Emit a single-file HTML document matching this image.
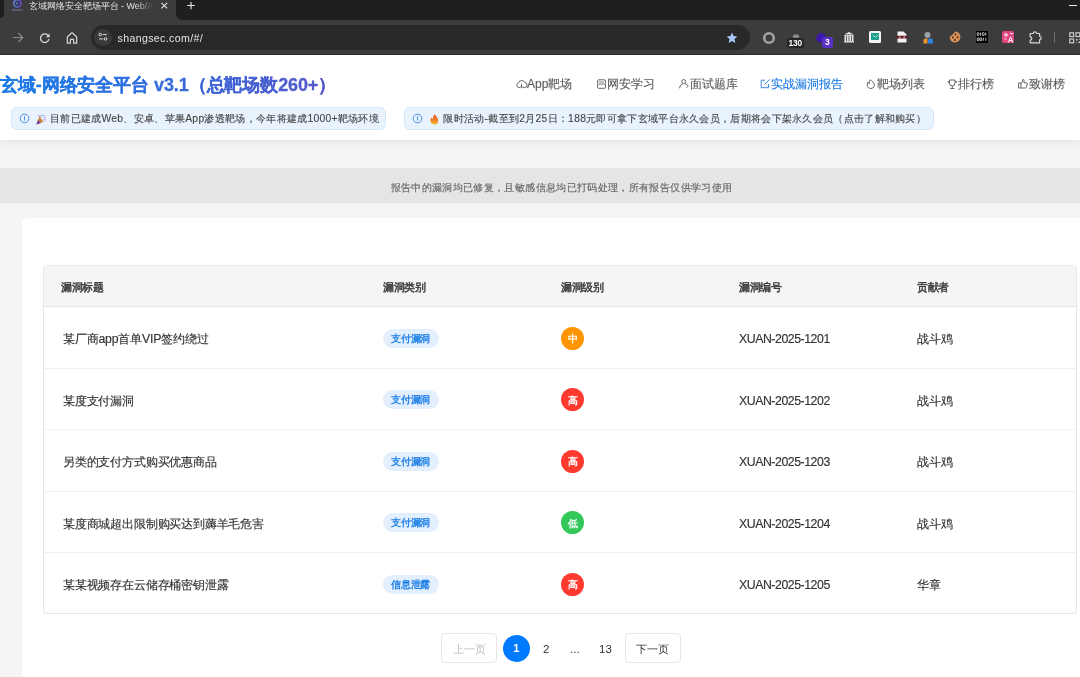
<!DOCTYPE html>
<html><head><meta charset="utf-8">
<style>
*{box-sizing:border-box;margin:0;padding:0}
html,body{width:1080px;height:677px;overflow:hidden;background:#f5f5f7;font-family:"Liberation Sans",sans-serif}
.abs{position:absolute}
#tabs{position:absolute;left:0;top:0;width:1080px;height:20px;background:#3c3c3c}
#tab{position:absolute;left:3px;top:0;width:173px;height:20px}
#toolbar{position:absolute;left:0;top:20px;width:1080px;height:35px;background:#3c3c3c}
#omni{position:absolute;left:91px;top:4.8px;width:659px;height:25px;background:#282828;border-radius:13px}
#page{position:absolute;left:0;top:55px;width:1080px;height:622px;background:#f5f5f7;overflow:hidden}
#header{position:absolute;left:0;top:0;width:1080px;height:85px;background:#fff;box-shadow:0 2px 8px rgba(0,0,0,.08)}
#title{position:absolute;left:0;top:17px;font-size:18px;font-weight:bold;white-space:nowrap;background:linear-gradient(90deg,#1a7ae6 0%,#2f6fe0 40%,#5656c8 100%);-webkit-background-clip:text;background-clip:text;color:transparent;line-height:26px;letter-spacing:-.1px;-webkit-text-stroke:.3px transparent}
.nav{position:absolute;top:20px;font-size:12px;color:#5a5a5a;white-space:nowrap;line-height:18px}
.nav.on{color:#1a7ae6}
.nav svg{position:absolute;left:0;top:4px}
.nav span{position:absolute;left:11px;top:0;-webkit-text-stroke:.12px currentColor}
.pill{position:absolute;top:51.5px;height:23px;background:#e9f3fe;border:1px solid #d3e6fb;border-radius:6px}
.pill .txt{position:absolute;top:3.5px;-webkit-text-stroke:.12px #444;letter-spacing:.3px;font-size:10.3px;color:#444;white-space:nowrap;line-height:16px}
#band{position:absolute;left:0;top:113px;width:1080px;height:35px;background:#e5e5e7}
#band div{position:absolute;left:390.5px;top:11.5px;-webkit-text-stroke:.15px #666;white-space:nowrap;letter-spacing:.36px;font-size:10.3px;color:#666;line-height:16px}
#card{position:absolute;left:22px;top:162.5px;width:1070px;height:500px;background:#fff;border-radius:4px;box-shadow:0 0 2px rgba(0,0,0,.05)}
#table{position:absolute;left:21px;top:47.5px;width:1034px;height:349px;border:1px solid #e6e6e8;border-radius:4px;overflow:hidden}
#thead{position:absolute;left:0;top:0;width:1034px;height:41px;background:#f5f5f7;border-bottom:1px solid #e6e6e8}
.th{position:absolute;top:13px;font-size:10.7px;letter-spacing:-.5px;font-weight:normal;-webkit-text-stroke:.45px #3a3a3a;color:#3a3a3a;line-height:16px;white-space:nowrap}
.row{position:absolute;left:0;width:1034px;height:61.5px;border-bottom:1px solid #f2f2f2}
.td{position:absolute;top:23px;font-size:12.3px;color:#333;-webkit-text-stroke:.15px #333;letter-spacing:-.18px;line-height:18px;white-space:nowrap}
.tag{position:absolute;left:339px;top:21.5px;width:55.5px;height:19px;border-radius:10px;background:#e3effd;color:#1a7ee8;font-size:9.8px;font-weight:normal;-webkit-text-stroke:.35px #1a7ee8;text-align:center;line-height:20px;letter-spacing:-.3px;text-indent:-.3px}
.lvl{position:absolute;left:517px;top:19.5px;padding-top:.8px;width:23.4px;height:23.4px;border-radius:50%;color:#fff;font-size:9.5px;font-weight:bold;text-align:center;line-height:23.4px}
.pbtn{position:absolute;top:577.5px;height:30px;width:56px;border:1px solid #e6e6e6;border-radius:4px;font-size:11px;text-align:center;line-height:30px;background:#fff}
.pn{position:absolute;top:586px;font-size:11.5px;color:#333;line-height:16px}
</style></head><body><div style="will-change:transform;position:absolute;left:0;top:0;width:1080px;height:677px;overflow:hidden">
<div id="tabs">
  <div class="abs" style="left:0;top:0;width:4px;height:17.5px;background:#1f1f1f;border-radius:0 0 4px 0"></div>
  <div id="tab">
    <svg class="abs" style="left:5.5px;top:0;opacity:.8" width="14" height="13" viewBox="0 0 14 13"><defs><linearGradient id="fg" x1="0" y1="0" x2="1" y2="0"><stop offset="0" stop-color="#6a9ad8"/><stop offset="1" stop-color="#8a4ad0"/></linearGradient></defs><path d="M3.6 -1h9.4v5.2Q13 7.6 8.5 8.2 3.6 7.6 3.6 4.2z" fill="#2a3a78"/><circle cx="8.4" cy="3.4" r="3.6" fill="none" stroke="url(#fg)" stroke-width="1.6"/><circle cx="7.8" cy="3.6" r="1" fill="#8a9ab8"/><rect x="3" y="9.2" width="10.5" height="1.6" fill="#6a6a8c"/></svg>
    <div class="abs" id="tabtitle" style="left:25.5px;top:0;width:125px;height:14px;overflow:hidden;white-space:nowrap;font-size:9px;line-height:12px;color:#e3e3e3;-webkit-mask-image:linear-gradient(90deg,#000 85%,transparent)">玄域网络安全靶场平台 - Web/App渗透</div>
    <svg class="abs" style="left:155px;top:0" width="12" height="11" viewBox="0 0 12 11"><path d="M3.4 2.9l5.8 5.5M9.2 2.9l-5.8 5.5" stroke="#e8e8e8" stroke-width="1.1"/></svg>
  </div>
  <div class="abs" style="left:176px;top:0;width:904px;height:20px;background:#1f1f1f;border-radius:0 0 0 6px"></div>
  <svg class="abs" style="left:185px;top:0" width="12" height="12" viewBox="0 0 12 12"><path d="M6 1.9v7.3M2.2 5.5h7.6" stroke="#e8e8e8" stroke-width="1.2"/></svg>
  <div class="abs" style="left:1068.5px;top:4.8px;width:8.5px;height:1.2px;background:#e8e8e8"></div>
</div>
<div id="toolbar">
  <svg class="abs" style="left:11px;top:11px" width="14" height="13" viewBox="0 0 14 13"><path d="M2 6.5h9.5M7.3 2l4.5 4.5-4.5 4.5" fill="none" stroke="#8c8c8c" stroke-width="1.1"/></svg>
  <svg class="abs" style="left:38px;top:12px" width="14" height="13" viewBox="0 0 14 13"><path d="M10.6 4.2A4.3 4.3 0 1 0 11 7.2" fill="none" stroke="#d6d6d6" stroke-width="1.3"/><path d="M11.6 1.5v3.8H7.8z" fill="#d6d6d6"/></svg>
  <svg class="abs" style="left:65px;top:11px" width="14" height="14" viewBox="0 0 14 14"><path d="M2.3 12.2V6L7 1.6 11.7 6v6.2H8.6V8.3H5.4v3.9z" fill="none" stroke="#d6d6d6" stroke-width="1.2" stroke-linejoin="round"/></svg>
  <div id="omni">
    <div class="abs" style="left:3.3px;top:3.9px;width:17.5px;height:17.5px;border-radius:50%;background:#3a3a3a"></div>
    <svg class="abs" style="left:6px;top:6.5px" width="12" height="12" viewBox="0 0 12 12"><circle cx="3.2" cy="3.6" r="1.3" fill="none" stroke="#dcdcdc" stroke-width="1"/><path d="M5.6 3.6h4.2M2 7.9h4.2" stroke="#dcdcdc" stroke-width="1"/><circle cx="8.6" cy="7.9" r="1.3" fill="none" stroke="#dcdcdc" stroke-width="1"/></svg>
    <div class="abs" style="left:26.5px;top:6.5px;font-size:10.6px;line-height:14px;color:#e3e3e3;white-space:nowrap;letter-spacing:.36px">shangsec.com/#/</div>
    <svg class="abs" style="left:634.5px;top:6.8px" width="12" height="12" viewBox="0 0 12 12"><path d="M6 .6l1.6 3.5 3.8.4-2.9 2.6.8 3.8L6 9 2.7 10.9l.8-3.8L.6 4.5l3.8-.4z" fill="#a8c7fa"/></svg>
  </div>
  <svg class="abs" style="left:762px;top:10.5px" width="14" height="14" viewBox="0 0 14 14"><circle cx="7" cy="7" r="4.8" fill="none" stroke="#a3a3a3" stroke-width="2.6"/></svg>
  <svg class="abs" style="left:792px;top:11.5px" width="8" height="6" viewBox="0 0 8 6"><path d="M.8 5.5A3.2 3.2 0 0 1 7.2 5.5z" fill="#9a9a9a"/><path d="M2 3.2h4" stroke="#666" stroke-width=".7"/></svg>
  <div class="abs" style="left:787px;top:18px;width:16.5px;height:9.5px;background:#262626;border-radius:2px;color:#fff;font-size:8.4px;font-weight:bold;line-height:10px;text-align:center;letter-spacing:-.1px">130</div>
  <svg class="abs" style="left:815px;top:11.5px" width="12" height="12" viewBox="0 0 12 12"><path d="M2 3.5L6 .5l4.5 2.5v5L6 11 1 8z" fill="#3d17b0"/></svg>
  <div class="abs" style="left:822px;top:17px;width:10.5px;height:10.5px;background:#5a30c8;border-radius:2.5px;color:#fff;font-size:8.5px;font-weight:bold;line-height:10px;text-align:center">3</div>
  <svg class="abs" style="left:843px;top:11px" width="12" height="12" viewBox="0 0 12 12"><path d="M1.2 3.6L6 .9l4.8 2.7z" fill="#e6e6e6"/><rect x="1.5" y="4" width="9" height="6.6" fill="#e6e6e6"/><path d="M3.5 4.6v5.5M6 4.6v5.5M8.5 4.6v5.5" stroke="#555" stroke-width=".9"/><rect x="1" y="10.3" width="10" height="1.2" fill="#e6e6e6"/></svg>
  <div class="abs" style="left:869px;top:11.2px;width:12.3px;height:12px;background:#f4f4f4;border-radius:1.5px"></div>
  <div class="abs" style="left:870.8px;top:13.2px;width:8.7px;height:6.8px;background:#1f9e8a"></div>
  <svg class="abs" style="left:870.8px;top:13.2px" width="9" height="7" viewBox="0 0 9 7"><path d="M1.5 2l3 2.3L7.5 2" fill="none" stroke="#c8f0e8" stroke-width=".8"/></svg>
  <svg class="abs" style="left:896px;top:11px" width="12" height="12" viewBox="0 0 12 12"><path d="M1.5 .6h6l3 3v7.8h-9z" fill="#f2f2f2"/><rect x=".5" y="4.8" width="11" height="2.8" rx="1" fill="#6a1a24"/><circle cx="3.8" cy="6.2" r=".8" fill="#ddd"/><circle cx="8.2" cy="6.2" r=".8" fill="#ddd"/></svg>
  <svg class="abs" style="left:922px;top:11px" width="12" height="13" viewBox="0 0 12 13"><circle cx="5.5" cy="4" r="3" fill="#9aa0a8"/><path d="M1.5 12.5v-4l3-1.5 1 1v4.5z" fill="#e8962e"/><path d="M6 12.5V8.5l2.5-1.5 2.5 1.5v4z" fill="#2f7fe0"/></svg>
  <svg class="abs" style="left:949px;top:10.8px" width="12" height="12" viewBox="0 0 12 12"><path d="M6.2.6C9.5.8 11.6 3.3 11.4 6.3 11.2 9.4 8.7 11.6 5.6 11.4 2.6 11.2.5 8.7.7 5.7 1.5 5.8 2.3 5 2.5 4 3.5 4 4.3 3.2 4.2 2.2 5.2 2 6 1.5 6.2.6z" fill="#d5925c"/><circle cx="6.5" cy="3.6" r="1" fill="#5a2a10"/><circle cx="3.8" cy="6.5" r="1" fill="#5a2a10"/><circle cx="8.6" cy="6.3" r="1" fill="#5a2a10"/><circle cx="6" cy="9" r="1" fill="#5a2a10"/></svg>
  <div class="abs" style="left:975.6px;top:11px;width:12.2px;height:11.8px;background:#000"></div>
  <svg class="abs" style="left:975.6px;top:11px" width="13" height="12" viewBox="0 0 13 12"><g fill="none" stroke="#fff" stroke-width=".75"><rect x="1.2" y="1.6" width="1.8" height="3" rx=".8"/><path d="M4.6 1.6v3"/><rect x="6.4" y="1.6" width="1.8" height="3" rx=".8"/><path d="M9.8 1.6v3"/><rect x="1.2" y="6.8" width="1.8" height="3" rx=".8"/><rect x="3.9" y="6.8" width="1.8" height="3" rx=".8"/><path d="M7.3 6.8v3M9.8 6.8v3"/></g></svg>
  <div class="abs" style="left:1002px;top:10.5px;width:12.3px;height:12.8px;background:#e3447e;border-radius:2px"></div>
  <svg class="abs" style="left:1002px;top:10.5px" width="13" height="13" viewBox="0 0 13 13"><path d="M4 1.8v4.2M1.9 3.9h4.2" stroke="#fff" stroke-width="1"/><path d="M2.2 7.6q1.6 0 2.4 1.2" fill="none" stroke="#fff" stroke-width=".9"/><path d="M6.3 11.6l2.3-5.8 2.3 5.8M7.2 9.6h2.8" fill="none" stroke="#fff" stroke-width="1"/><path d="M8 2.6h3" stroke="#fff" stroke-width=".9"/></svg>
  <svg class="abs" style="left:1029px;top:10.5px" width="14" height="13" viewBox="0 0 14 13"><path d="M1.2 2.5h3.2a1.6 1.6 0 0 1 3.2 0h3v3a1.6 1.6 0 0 1 0 3.2v3.2H1.2V9a1.6 1.6 0 0 0 0-3.2z" fill="none" stroke="#d6d6d6" stroke-width="1.2" stroke-linejoin="round"/></svg>
  <div class="abs" style="left:1054px;top:12px;width:1px;height:10.8px;background:#6a6a6a"></div>
  <svg class="abs" style="left:1069px;top:11.5px" width="12" height="12" viewBox="0 0 12 12"><rect x=".8" y=".8" width="3.8" height="3.8" fill="none" stroke="#d6d6d6" stroke-width="1.1"/><rect x="7" y=".8" width="3.8" height="3.8" fill="none" stroke="#d6d6d6" stroke-width="1.1"/><rect x=".8" y="7" width="3.8" height="3.8" fill="none" stroke="#d6d6d6" stroke-width="1.1"/><path d="M7 7h1.5v1.5H7zM9.5 9.5H11V11H9.5zM9.5 7H11v1M7 9.5v1.5h1" fill="#d6d6d6"/></svg>
  <div class="abs" style="left:0;top:34px;width:1080px;height:1px;background:#2c2c2c"></div>
</div>
<div id="page">
  <div id="header">
    <div id="title">玄域-网络安全平台 v3.1（总靶场数260+）</div>
    <div class="nav" style="left:516px"><svg width="12" height="11" viewBox="0 0 12 11"><path d="M4 8.6H3A2.5 2.5 0 0 1 2.7 3.7 3.1 3.1 0 0 1 8.6 3.5 2.5 2.5 0 0 1 8.6 8.6H7" fill="none" stroke="#666" stroke-width="1"/><path d="M5.5 4.8v4.2M4.2 7.6l1.3 1.3 1.3-1.3" fill="none" stroke="#666" stroke-width="1"/></svg><span>App靶场</span></div>
    <div class="nav" style="left:596px"><svg width="12" height="11" viewBox="0 0 12 11"><path d="M1.5 4.5V2.2Q1.5 .8 2.9 .8h5.2Q9.5 .8 9.5 2.2v2.3" fill="none" stroke="#666" stroke-width="1"/><path d="M1.3 4.6l1.4 1 1.4-1 1.4 1 1.4-1 1.4 1 1.4-1" fill="none" stroke="#666" stroke-width="1"/><path d="M2.8 3h5.4" stroke="#777" stroke-width=".9"/><path d="M1.5 5.5v2.8Q1.5 9.3 2.7 9.3h5.6Q9.5 9.3 9.5 8.3V5.5" fill="none" stroke="#666" stroke-width="1"/></svg><span>网安学习</span></div>
    <div class="nav" style="left:678.5px"><svg width="12" height="11" viewBox="0 0 12 11"><circle cx="4.7" cy="2.6" r="2" fill="none" stroke="#666" stroke-width="1"/><path d="M.6 9.3A4.3 4.3 0 0 1 3.6 4.9M5.9 4.9A4.4 4.4 0 0 1 9.3 6.9L7.5 8.7" fill="none" stroke="#666" stroke-width="1"/></svg><span>面试题库</span></div>
    <div class="nav on" style="left:760px"><svg width="12" height="11" viewBox="0 0 12 11"><path d="M5 1.2H1.2v7.5h7.4V5" fill="none" stroke="#3a86e4" stroke-width="1"/><path d="M4.5 5.5L9.6.3" fill="none" stroke="#3a86e4" stroke-width="1"/></svg><span>实战漏洞报告</span></div>
    <div class="nav" style="left:866px"><svg width="12" height="11" viewBox="0 0 12 11"><path d="M4.2.8Q2.5 3.5 3.3 4.8 2.5 4.5 2 3.2 .6 5.5 1.3 7.3 2.3 9.5 4.8 9.6 7.5 9.5 8.3 7 8.8 4.8 6.8 2.8 5.2 1.3 4.2.8z" fill="none" stroke="#666" stroke-width="1" stroke-linejoin="round"/></svg><span>靶场列表</span></div>
    <div class="nav" style="left:947px"><svg width="12" height="11" viewBox="0 0 12 11"><path d="M2.5 1h5.5v3Q8 6.8 5.3 7 2.5 6.8 2.5 4z" fill="none" stroke="#666" stroke-width="1"/><path d="M2.5 2.5H.8M8 2.5h1.8M.9 3.4H2.3M8.2 3.4h1.5" stroke="#777" stroke-width="1"/><path d="M5.3 7v2.2M3.3 9.5h4" stroke="#666" stroke-width="1"/></svg><span>排行榜</span></div>
    <div class="nav" style="left:1018px"><svg width="12" height="11" viewBox="0 0 12 11"><path d="M.6 4H3v5H.6z" fill="none" stroke="#666" stroke-width="1"/><path d="M3 4L4.5 3V1Q4.5.4 5.2.4 6 .4 6 1.3v2.5h2.4Q9.4 3.8 9.2 5L8.4 8.2Q8.2 9 7.4 9H3" fill="none" stroke="#666" stroke-width="1" stroke-linejoin="round"/></svg><span>致谢榜</span></div>
    <div class="pill" style="left:11px;width:375px"><svg class="abs" style="left:7px;top:5.5px" width="11" height="11" viewBox="0 0 11 11"><circle cx="5.5" cy="5.5" r="4.3" fill="none" stroke="#4a8ee6" stroke-width="1"/><path d="M5.5 3.2v4.3" stroke="#4a8ee6" stroke-width="1"/></svg><svg class="abs" style="left:23.5px;top:6.5px" width="11" height="11" viewBox="0 0 11 11"><path d="M.4 10.4L3.2 2.8 7.8 7.4z" fill="#c88a3c"/><path d="M.4 10.4L2 6 5 9z" fill="#7a3a9a"/><path d="M3.2 2.8L4.2 1.2 4.8 4.6z" fill="#e0506a"/><path d="M5.2 1L6.2 .2 6.4 3.4z" fill="#3aa0e0"/><path d="M6.8 4.2L10 3 9.8 4z" fill="#c06ad0"/><path d="M6.5 5.8L9.8 5.6 9.6 6.4z" fill="#8a5ae0"/><circle cx="2.6" cy="1.6" r=".5" fill="#7a4a9a"/><circle cx="8.2" cy="1.6" r=".5" fill="#7a4a9a"/></svg><div class="txt" style="left:38px">目前已建成Web、安卓、苹果App渗透靶场，今年将建成1000+靶场环境</div></div>
    <div class="pill" style="left:404px;width:530px"><svg class="abs" style="left:7px;top:5.5px" width="11" height="11" viewBox="0 0 11 11"><circle cx="5.5" cy="5.5" r="4.3" fill="none" stroke="#4a8ee6" stroke-width="1"/><path d="M5.5 3.2v4.3" stroke="#4a8ee6" stroke-width="1"/></svg><svg class="abs" style="left:24.5px;top:6.5px" width="9" height="11" viewBox="0 0 9 11"><defs><linearGradient id="fl" x1="0" y1="0" x2="0" y2="1"><stop offset="0" stop-color="#e8502a"/><stop offset=".6" stop-color="#f0822a"/><stop offset="1" stop-color="#f8c830"/></linearGradient></defs><path d="M4.5.2Q7.2 2.6 8 5.4 8.8 8.2 7 9.8 5.6 10.9 4 10.6 1.3 10.2.5 7.8-.1 5.6 1.5 3.2 1.8 4.8 2.6 5 3 2.5 4.5.2z" fill="url(#fl)"/></svg><div class="txt" style="left:38.3px">限时活动-截至到2月25日：188元即可拿下玄域平台永久会员，后期将会下架永久会员（点击了解和购买）</div></div>
  </div>
  <div id="band"><div>报告中的漏洞均已修复，且敏感信息均已打码处理，所有报告仅供学习使用</div></div>
  <div id="card">
    <div id="table">
      <div id="thead">
        <div class="th" style="left:17px">漏洞标题</div>
        <div class="th" style="left:339px">漏洞类别</div>
        <div class="th" style="left:517px">漏洞级别</div>
        <div class="th" style="left:695px">漏洞编号</div>
        <div class="th" style="left:873px">贡献者</div>
      </div>
      <div class="row" style="top:41px"><div class="td" style="left:19px">某厂商app首单VIP签约绕过</div><div class="tag">支付漏洞</div><div class="lvl" style="background:#ff9500">中</div><div class="td" style="left:695px;letter-spacing:-.45px">XUAN-2025-1201</div><div class="td" style="left:873px">战斗鸡</div></div>
      <div class="row" style="top:102.5px"><div class="td" style="left:19px">某度支付漏洞</div><div class="tag">支付漏洞</div><div class="lvl" style="background:#ff3b30">高</div><div class="td" style="left:695px;letter-spacing:-.45px">XUAN-2025-1202</div><div class="td" style="left:873px">战斗鸡</div></div>
      <div class="row" style="top:164px"><div class="td" style="left:19px">另类的支付方式购买优惠商品</div><div class="tag">支付漏洞</div><div class="lvl" style="background:#ff3b30">高</div><div class="td" style="left:695px;letter-spacing:-.45px">XUAN-2025-1203</div><div class="td" style="left:873px">战斗鸡</div></div>
      <div class="row" style="top:225.5px"><div class="td" style="left:19px">某度商城超出限制购买达到薅羊毛危害</div><div class="tag">支付漏洞</div><div class="lvl" style="background:#34c759">低</div><div class="td" style="left:695px;letter-spacing:-.45px">XUAN-2025-1204</div><div class="td" style="left:873px">战斗鸡</div></div>
      <div class="row" style="top:287px;border-bottom:0"><div class="td" style="left:19px">某某视频存在云储存桶密钥泄露</div><div class="tag">信息泄露</div><div class="lvl" style="background:#ff3b30">高</div><div class="td" style="left:695px;letter-spacing:-.45px">XUAN-2025-1205</div><div class="td" style="left:873px">华章</div></div>
    </div>
  </div>
  <div class="pbtn" style="left:441px;color:#bbb">上一页</div>
  <div class="abs" style="left:502.5px;top:579.5px;width:27.5px;height:27.5px;border-radius:50%;background:#007aff;color:#fff;font-weight:bold;font-size:11px;text-align:center;line-height:27.5px">1</div>
  <div class="pn" style="left:543px">2</div>
  <div class="pn" style="left:570px">...</div>
  <div class="pn" style="left:599px">13</div>
  <div class="pbtn" style="left:624.5px;color:#333">下一页</div>
</div>
</div></body></html>
